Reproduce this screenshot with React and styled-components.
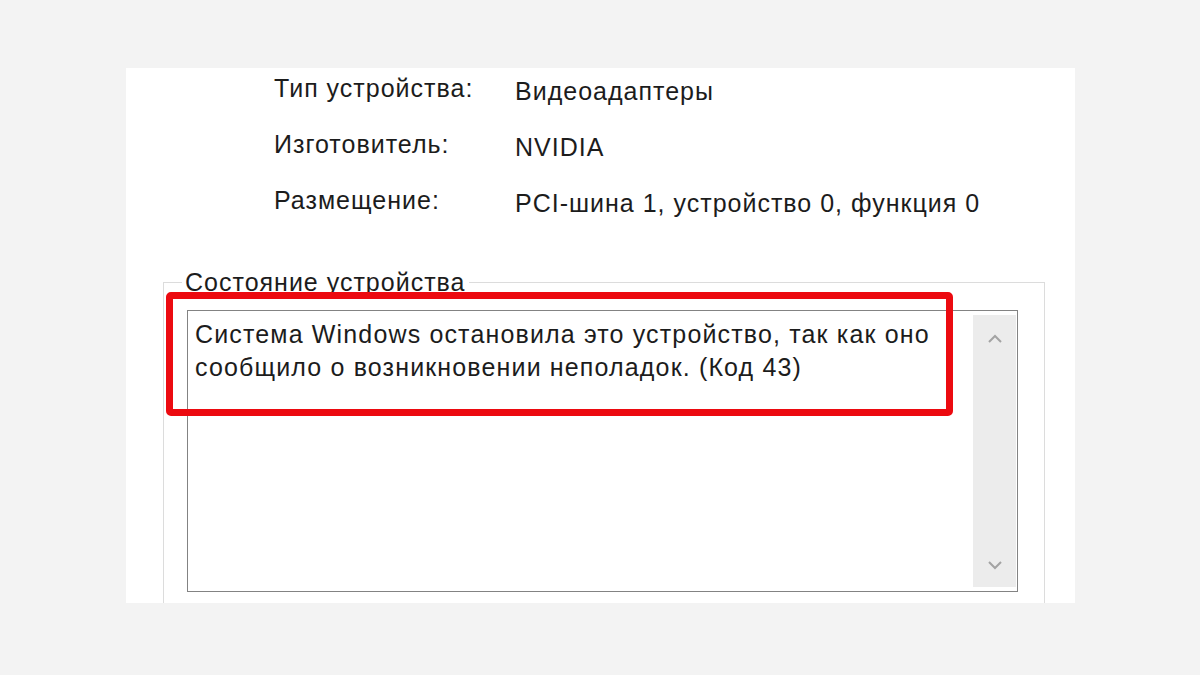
import React from "react";
import styled, { createGlobalStyle } from "styled-components";

const GlobalStyle = createGlobalStyle`
  html, body {
    margin: 0;
    padding: 0;
    background: #f3f3f3;
  }
  body {
    font-family: "Liberation Sans", Arial, sans-serif;
    color: #1c1c1c;
  }
`;

const Page = styled.div`
  width: 1200px;
  height: 675px;
  box-sizing: border-box;
  padding: 68px 125px 72px 126px;
`;

const Panel = styled.div`
  background: #fff;
  height: 100%;
  overflow: hidden;
  display: flex;
  flex-direction: column;
`;

const InfoList = styled.div`
  display: flex;
  flex-direction: column;
  gap: 23px;
  padding: 5px 0 0 148px;
`;

const Row = styled.div`
  display: grid;
  grid-template-columns: 241px 1fr;
  align-items: start;
  font-size: 25px;
  line-height: 30px;
  letter-spacing: 1px;
`;

const Label = styled.div``;

const Value = styled.div`
  padding-top: 3px;
`;

const GroupBox = styled.fieldset`
  margin: 49px 30px 0 37px;
  padding: 0;
  min-width: 0;
  border: 1px solid #dcdcdc;
  height: 420px;
  flex-shrink: 0;
`;

const Legend = styled.legend`
  margin-left: 18px;
  padding: 0 3px;
  font-size: 25px;
  line-height: 30px;
  letter-spacing: 1px;
`;

const GroupBody = styled.div`
  padding: 13px 26px 0 23px;
`;

const TextBox = styled.div`
  position: relative;
  height: 282px;
  box-sizing: border-box;
  border: 1px solid #838383;
  display: flex;
`;

const Message = styled.div`
  flex: 1;
  padding: 7px 8px 0 7px;
  font-size: 25px;
  line-height: 33px;
  letter-spacing: 1.15px;
`;

const ScrollBar = styled.div`
  width: 43px;
  margin: 4px 1px 4px 0;
  background: #ececec;
  display: flex;
  flex-direction: column;
  justify-content: space-between;
  align-items: center;
  padding: 19px 0 17px;
  box-sizing: border-box;
`;

const Highlight = styled.div`
  position: absolute;
  left: -22px;
  top: -19px;
  width: 787px;
  height: 124px;
  box-sizing: border-box;
  border: 7px solid #ec0a10;
  border-radius: 5px;
  pointer-events: none;
`;

const Chevron = ({ down }) => (
  <svg width="16" height="10" viewBox="0 0 16 10">
    <path
      d={down ? "M2 2 L8 8 L14 2" : "M2 8 L8 2 L14 8"}
      fill="none"
      stroke="#a3a3a3"
      strokeWidth="2"
    />
  </svg>
);

const rows = [
  ["Тип устройства:", "Видеоадаптеры"],
  ["Изготовитель:", "NVIDIA"],
  ["Размещение:", "PCI-шина 1, устройство 0, функция 0"],
];

export default function App() {
  return (
    <>
      <GlobalStyle />
      <Page>
        <Panel>
          <InfoList>
            {rows.map(([label, value]) => (
              <Row key={label}>
                <Label>{label}</Label>
                <Value>{value}</Value>
              </Row>
            ))}
          </InfoList>
          <GroupBox>
            <Legend>Состояние устройства</Legend>
            <GroupBody>
              <TextBox>
                <Message>
                  Система Windows остановила это устройство, так как оно
                  <br />
                  сообщило о возникновении неполадок. (Код 43)
                </Message>
                <ScrollBar>
                  <Chevron />
                  <Chevron down />
                </ScrollBar>
                <Highlight />
              </TextBox>
            </GroupBody>
          </GroupBox>
        </Panel>
      </Page>
    </>
  );
}
